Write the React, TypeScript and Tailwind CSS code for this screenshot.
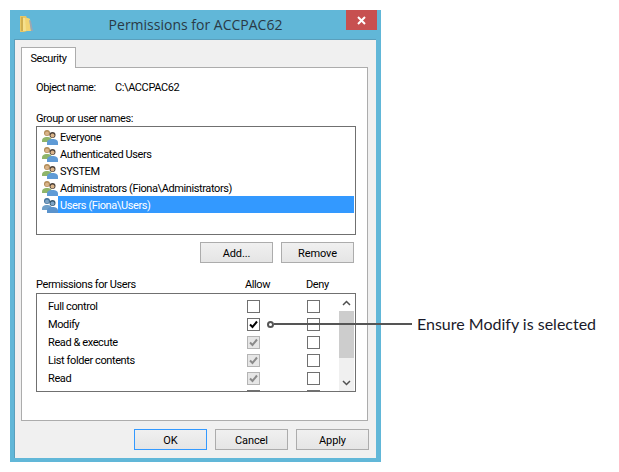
import React from 'react';

const uiFont = "font-['Roboto',sans-serif] tracking-[-0.4px]";

const FolderIcon: React.FC = () => (
  <svg width="16" height="18" viewBox="0 0 16 18">
    <path d="M3 1h6l1 2v13l-3 1H3z" fill="#e8c765" />
    <path d="M6 3h5v13H6z" fill="#f6e08e" />
    <path d="M8 3h3l2 1 1 12H9z" fill="#f2d372" />
    <path d="M12 5l2 11h2l-2-10z" fill="#9aa7b4" />
    <path d="M5 2v14" stroke="#b8963a" strokeWidth="1" />
  </svg>
);

const UsersIcon: React.FC<{ selected?: boolean }> = ({ selected }) => {
  const back = selected ? '#6f9fc8' : '#8fb56a';
  const backDark = selected ? '#3f6f99' : '#b08a55';
  const front = selected ? '#5b93cc' : '#5f9bd6';
  const skin = selected ? '#7da3c4' : '#d9b48a';
  return (
    <svg width="16" height="16" viewBox="0 0 16 16" className="shrink-0">
      <circle cx="5" cy="4" r="3" fill={backDark} />
      <circle cx="5" cy="4.5" r="2" fill={skin} />
      <path d="M0 12c0-3 2-4 5-4s5 1 5 4v1H0z" fill={back} />
      <circle cx="10.5" cy="6" r="3" fill={selected ? '#35566f' : '#4b4038'} />
      <circle cx="10.5" cy="6.5" r="2" fill={skin} />
      <path d="M5 14c0-3 2-4 5.5-4s5.500 1 5.500 4v2H5z" fill={front} />
    </svg>
  );
};

const Button: React.FC<{ label: string; primary?: boolean }> = ({ label, primary }) => (
  <button
    className={`w-[73px] h-[21px] border pt-px flex items-center justify-center text-[11px] tracking-[-0.1px] leading-none text-black bg-gradient-to-b from-[#f0f0f0] to-[#e5e5e5] ${
      primary ? 'border-[#3399ff]' : 'border-[#acacac]'
    }`}
  >
    {label}
  </button>
);

const Checkbox: React.FC<{ state?: 'on' | 'grey' }> = ({ state }) => (
  <div
    className={`w-[13px] h-[13px] border flex items-center justify-center ${
      state === 'grey' ? 'border-[#b4b4b4] bg-[#e6e6e6]' : 'border-[#707070] bg-white'
    }`}
  >
    {state && (
      <svg width="11" height="11" viewBox="0 0 11 11">
        <path
          d="M2 5.500l2.500 2.500L9 2.500"
          fill="none"
          stroke={state === 'on' ? '#000' : '#8a8a8a'}
          strokeWidth="2"
        />
      </svg>
    )}
  </div>
);

const users = ['Everyone', 'Authenticated Users', 'SYSTEM', 'Administrators (Fiona\\Administrators)', 'Users (Fiona\\Users)'];

const perms: { name: string; allow?: 'on' | 'grey' }[] = [
  { name: 'Full control' },
  { name: 'Modify', allow: 'on' },
  { name: 'Read & execute', allow: 'grey' },
  { name: 'List folder contents', allow: 'grey' },
  { name: 'Read', allow: 'grey' },
  { name: '' },
];

const App: React.FC = () => {
  return (
    <div className={`relative w-[619px] h-[472px] bg-white pt-[10px] pl-[10px] overflow-hidden ${uiFont}`}>
      {/* dialog window */}
      <div className="w-[371px] h-[452px] bg-[#61b7d8] flex flex-col">
        <div className="relative h-[29px] shrink-0 flex items-center justify-center">
          <div className="absolute left-[7px] top-[5px]">
            <FolderIcon />
          </div>
          <span className="text-[14px] tracking-normal leading-none text-[#2a3a46] mt-[1px] font-['Open_Sans',sans-serif]">
            Permissions for ACCPAC62
          </span>
          <div className="absolute left-[336px] top-0 w-[31px] h-[20px] bg-[#c75050] flex items-center justify-center">
            <svg width="9" height="9" viewBox="0 0 9 9">
              <path d="M1 1l7 7M8 1l-7 7" stroke="#fff" strokeWidth="2" />
            </svg>
          </div>
        </div>

        <div className="ml-[4px] w-[362px] h-[419px] bg-[#f0f0f0] border-t border-l border-[#5a9fbc] pt-[7px] pl-[6px] flex flex-col">
          <div className="relative z-10 w-[55px] h-[21px] -mb-px bg-white border border-b-0 border-[#acacac] flex items-center justify-center text-[11px] leading-none text-black">
            Security
          </div>

          {/* tab panel */}
          <div className="w-[347px] h-[354px] bg-white border border-[#acacac] pl-[14px] text-[11px] leading-none text-black flex flex-col">
            <div className="flex mt-[12px] h-[14px] items-center">
              <span className="w-[79px]">Object name:</span>
              <span>C:\ACCPAC62</span>
            </div>

            <div className="mt-[17px] h-[14px] flex items-center">Group or user names:</div>

            <div className="mt-[1px] w-[320px] h-[109px] border border-[#707070] pt-px pl-[5px] pr-px">
              {users.map((u, i) => {
                const selected = i === users.length - 1;
                return (
                  <div key={u} className="h-[17px] flex items-center">
                    <UsersIcon selected={selected} />
                    <span
                      className={`h-[17px] flex-1 flex items-center pl-[2px] pt-[2px] ${
                        selected ? 'bg-[#3399ff] text-white' : ''
                      }`}
                    >
                      {u}
                    </span>
                  </div>
                );
              })}
            </div>

            <div className="mt-[7px] w-[318px] flex justify-end gap-[8px]">
              <Button label="Add..." />
              <Button label="Remove" />
            </div>

            <div className="relative mt-[13px] h-[16px] flex items-center">
              <span className="w-[209px]">Permissions for Users</span>
              <span className="w-[61px]">Allow</span>
              <span>Deny</span>
            </div>

            <div className="mt-[1px] w-[320px] h-[99px] border border-[#707070] flex overflow-hidden">
              <div className="w-[302px] pt-[3px]">
                {perms.map((p, i) => (
                  <div key={i} className="h-[18px] flex items-center">
                    <span className="w-[210px] pl-[11px]">{p.name}</span>
                    <Checkbox state={p.allow} />
                    <div className="w-[47px]" />
                    <Checkbox />
                  </div>
                ))}
              </div>
              <div className="w-[15px] bg-[#f0f0f0] flex flex-col">
                <div className="h-[17px] flex items-center justify-center bg-white">
                  <svg width="9" height="6" viewBox="0 0 9 6">
                    <path d="M1 5l3.500-3.500L8 5" fill="none" stroke="#505050" strokeWidth="1.500" />
                  </svg>
                </div>
                <div className="h-[47px] bg-[#cdcdcd]" />
                <div className="flex-1" />
                <div className="h-[17px] flex items-center justify-center">
                  <svg width="9" height="6" viewBox="0 0 9 6">
                    <path d="M1 1l3.500 3.500L8 1" fill="none" stroke="#505050" strokeWidth="1.500" />
                  </svg>
                </div>
              </div>
            </div>
          </div>

          <div className="mt-[8px] w-[348px] flex justify-end gap-[8px]">
            <Button label="OK" primary />
            <Button label="Cancel" />
            <Button label="Apply" />
          </div>
        </div>
      </div>

      {/* callout */}
      <div className="absolute left-[267px] top-[321px] w-[7px] h-[7px] rounded-full border-2 border-[#555555] bg-white" />
      <div className="absolute left-[274px] top-[323px] w-[138px] h-[2px] bg-[#555555]" />
      <span className="absolute left-[417px] top-[315px] text-[16px] tracking-normal leading-[18px] text-[#1a1a2a] font-['Lato',sans-serif] whitespace-nowrap">
        Ensure Modify is selected
      </span>
    </div>
  );
};

export default App;
